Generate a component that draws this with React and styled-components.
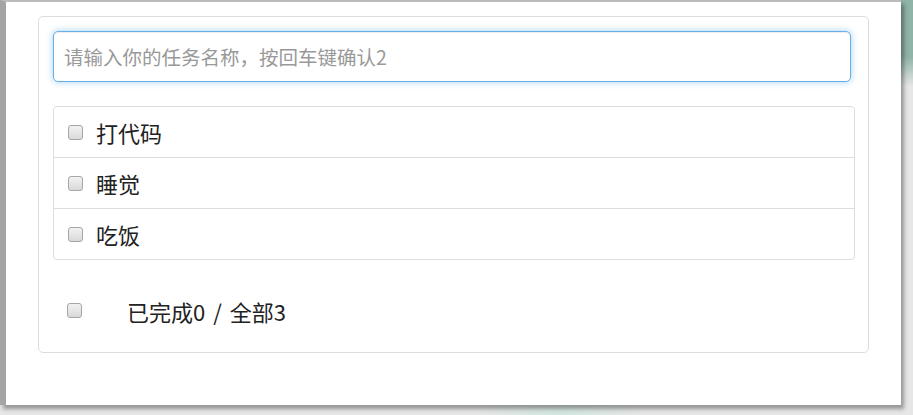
import React from "react";
import styled, { createGlobalStyle } from "styled-components";

const todos = [
  { id: 1, name: "打代码", done: false },
  { id: 2, name: "睡觉", done: false },
  { id: 3, name: "吃饭", done: false },
];

const GlobalStyle = createGlobalStyle`
  * { box-sizing: border-box; }
  body {
    margin: 0;
    background: #e4e4e4;
    font-family: "Noto Sans CJK SC", "Noto Sans", "Liberation Sans", sans-serif;
    color: #333;
  }
`;

const App = () => {
  const doneCount = todos.filter((t) => t.done).length;

  return (
    <>
      <GlobalStyle />
      <Screen>
        <Window>
          <Card>
            <TaskInput placeholder="请输入你的任务名称，按回车键确认2" />
            <TodoList>
              {todos.map((item) => (
                <TodoItem key={item.id}>
                  <Check />
                  <ItemText>{item.name}</ItemText>
                </TodoItem>
              ))}
            </TodoList>
            <Footer>
              <Check />
              <FooterText>
                已完成{doneCount} / 全部{todos.length}
              </FooterText>
            </Footer>
          </Card>
        </Window>
      </Screen>
    </>
  );
};
export default App;

export const Screen = styled.div`
  width: 913px;
  height: 415px;
  overflow: hidden;
  background:
    radial-gradient(circle at 100% 4%, #8fb3a6 0, #8fb3a6 40px, transparent 70px),
    radial-gradient(ellipse 90px 30px at 560px 420px, #cfe6df 0, transparent 100%),
    #e6e6e6;
`;

export const Window = styled.div`
  width: 901px;
  height: 405px;
  background: #fff;
  border-left: 6px solid #a4a4a4;
  border-top: 2px solid #bcbcbc;
  box-shadow: 3px 4px 4px rgba(0, 0, 0, 0.35);
  padding: 14px 0 0 32px;
`;

export const Card = styled.div`
  width: 831px;
  height: 337px;
  border: 1px solid #ddd;
  border-radius: 5px;
  padding: 14px 14px 0 14px;
`;

export const TaskInput = styled.input`
  display: block;
  width: 798px;
  height: 51px;
  margin: 0 0 24px;
  padding: 0 10px;
  border: 1px solid #66afe9;
  border-radius: 5px;
  outline: none;
  box-shadow: inset 0 1px 1px rgba(0, 0, 0, 0.075), 0 0 7px rgba(102, 175, 233, 0.6);
  font-family: inherit;
  font-size: 19.5px;
  color: #555;

  &::placeholder {
    color: #999;
  }
`;

export const TodoList = styled.ul`
  list-style: none;
  margin: 0;
  padding: 0;
  width: 802px;
  border: 1px solid #ddd;
  border-radius: 4px;
`;

export const TodoItem = styled.li`
  display: flex;
  align-items: center;
  height: 51px;
  padding: 0 0 0 14px;
  border-top: 1px solid #ddd;

  &:first-child {
    border-top: none;
    height: 50px;
  }
`;

export const Check = styled.span`
  flex: none;
  width: 15px;
  height: 15px;
  border: 1px solid #a6a6a6;
  border-radius: 3px;
  background: linear-gradient(#f2f2f2, #d9d9d9);
`;

export const ItemText = styled.span`
  margin-left: 13px;
  font-size: 22px;
  line-height: 1;
  color: #222;
`;

export const Footer = styled.div`
  display: flex;
  align-items: center;
  height: 51px;
  margin-top: 25px;
  padding-left: 14px;
`;

export const FooterText = styled.span`
  margin-left: 45px;
  font-size: 22px;
  line-height: 1;
  word-spacing: 3px;
  color: #222;
`;
